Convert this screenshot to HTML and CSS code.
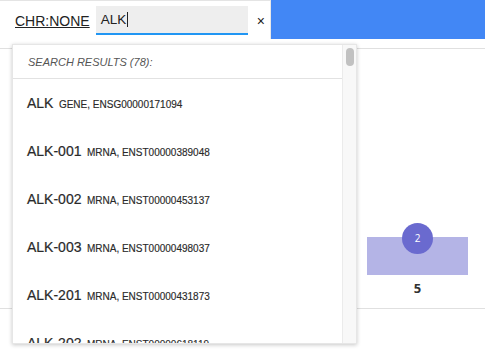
FILE: index.html
```html
<!DOCTYPE html>
<html>
<head>
<meta charset="utf-8">
<link rel="stylesheet" href="styles.css">
</head>
<body>
<header class="topbar">
  <div class="search-area">
    <a class="chr-link">CHR:NONE</a>
    <div class="search-input"><span class="search-text">ALK</span><span class="caret"></span></div>
    <span class="clear">×</span>
  </div>
  <div class="blue-area"></div>
</header>
<main class="main">
  <section class="card">
    <div class="bar-col">
      <div class="bar"><span class="badge">2</span></div>
      <div class="bar-label">5</div>
    </div>
  </section>
</main>
<div class="dropdown">
  <div class="results">
    <div class="results-head">SEARCH RESULTS (78):</div>
    <ul class="result-list">
      <li class="result"><span class="name">ALK</span> <span class="meta">gene, ENSG00000171094</span></li>
      <li class="result"><span class="name">ALK-001</span> <span class="meta">mRNA, ENST00000389048</span></li>
      <li class="result"><span class="name">ALK-002</span> <span class="meta">mRNA, ENST00000453137</span></li>
      <li class="result"><span class="name">ALK-003</span> <span class="meta">mRNA, ENST00000498037</span></li>
      <li class="result"><span class="name">ALK-201</span> <span class="meta">mRNA, ENST00000431873</span></li>
      <li class="result"><span class="name">ALK-202</span> <span class="meta">mRNA, ENST00000618119</span></li>
    </ul>
  </div>
  <div class="scrollbar"><div class="thumb"></div></div>
</div>
</body>
</html>
```
FILE: styles.css
```css
html, body {
  margin: 0;
  padding: 0;
  background: #ffffff;
  font-family: "Liberation Sans", Arial, sans-serif;
  color: #222;
}
body {
  position: relative;
  width: 485px;
  height: 351px;
  overflow: hidden;
}
.topbar {
  display: flex;
  height: 39px;
}
.search-area {
  width: 271px;
  box-sizing: border-box;
  border-top: 1px solid #e4e4e4;
  border-right: 1px solid #e8e8e8;
  display: flex;
  align-items: center;
  padding-left: 15px;
  padding-top: 1px;
}
.chr-link {
  font-size: 14px;
  color: #222;
  text-decoration: underline;
  text-underline-offset: 1px;
  margin-right: 6px;
}
.search-input {
  width: 152px;
  box-sizing: border-box;
  height: 29px;
  background: #eeeeee;
  border-bottom: 2px solid #2196f3;
  display: flex;
  align-items: center;
  padding-left: 5px;
  font-size: 13.5px;
  color: #222;
}
.caret {
  display: inline-block;
  width: 1px;
  height: 15px;
  background: #222;
  margin-left: 1px;
}
.clear {
  font-size: 14px;
  color: #222;
  margin-left: 9px;
}
.blue-area {
  flex: 1;
  background: #4287f5;
}
.main {
  padding-top: 9px;
}
.card {
  height: 259px;
  border-top: 1px solid #e0e0e0;
  border-bottom: 1px solid #e0e0e0;
  display: flex;
  justify-content: flex-end;
  padding-right: 17px;
}
.bar-col {
  width: 101px;
  display: flex;
  flex-direction: column;
  justify-content: flex-end;
  align-items: stretch;
  padding-bottom: 10px;
}
.bar {
  position: relative;
  height: 38px;
  background: #b4b4e6;
}
.badge {
  position: absolute;
  left: 50%;
  top: 1px;
  width: 31px;
  height: 31px;
  margin-left: -15.5px;
  margin-top: -15.5px;
  border-radius: 50%;
  background: #6a6acf;
  color: #fff;
  font-family: "Open Sans", sans-serif;
  font-size: 10px;
  line-height: 31px;
  text-align: center;
}
.bar-label {
  margin-top: 3px;
  height: 20px;
  line-height: 20px;
  text-align: center;
  font-family: "Open Sans", sans-serif;
  font-weight: 700;
  font-size: 13px;
  color: #333;
}
.dropdown {
  position: absolute;
  left: 12px;
  top: 44px;
  width: 345px;
  height: 300px;
  box-sizing: border-box;
  background: #fff;
  border: 1px solid #e6e6e6;
  box-shadow: 0 1px 4px rgba(0, 0, 0, 0.22);
  display: flex;
  overflow: hidden;
}
.results {
  flex: 1;
  overflow: hidden;
}
.results-head {
  height: 33px;
  line-height: 34px;
  padding-left: 15px;
  font-size: 11px;
  font-style: italic;
  color: #555;
  border-bottom: 1px solid #e2e2e2;
}
.result-list {
  list-style: none;
  margin: 0;
  padding: 0;
}
.result {
  height: 48px;
  line-height: 48px;
  padding-left: 14px;
  white-space: nowrap;
  color: #2a2a2a;
}
.name {
  font-size: 14px;
  color: #2a2a2a;
  -webkit-text-stroke: 0.2px #2a2a2a;
}
.meta {
  font-size: 10px;
  text-transform: uppercase;
  color: #2a2a2a;
  margin-left: 1px;
  -webkit-text-stroke: 0.15px #2a2a2a;
}
.scrollbar {
  width: 13px;
  border-left: 1px solid #ebebeb;
  background: #f8f8f8;
  position: relative;
}
.thumb {
  margin: 3px 0 0 3px;
  width: 8px;
  height: 18px;
  border-radius: 4px;
  background: #c1c1c1;
}
```
